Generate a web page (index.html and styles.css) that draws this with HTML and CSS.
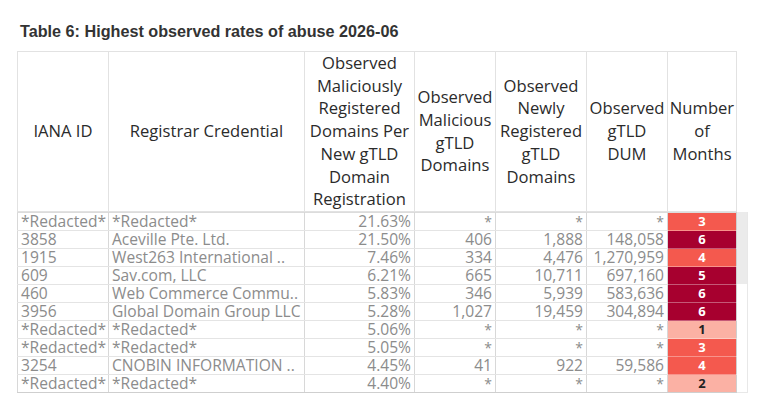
FILE: index.html
```html
<!DOCTYPE html>
<html>
<head>
<meta charset="utf-8">
<link rel="stylesheet" href="styles.css">
</head>
<body>
<h1 class="title">Table 6: Highest observed rates of abuse 2026-06</h1>
<div class="sheet">
  <table class="grid head">
    <colgroup>
      <col class="c1"><col class="c2"><col class="c3"><col class="c4"><col class="c5"><col class="c6"><col class="c7">
    </colgroup>
    <tr>
      <th>IANA ID</th>
      <th>Registrar Credential</th>
      <th>Observed Maliciously Registered Domains Per New gTLD Domain Registration</th>
      <th>Observed Malicious gTLD Domains</th>
      <th>Observed Newly Registered gTLD Domains</th>
      <th>Observed gTLD DUM</th>
      <th>Number of Months</th>
    </tr>
  </table>
  <div class="bodywrap">
    <table class="grid body">
      <colgroup>
        <col class="c1"><col class="c2"><col class="c3"><col class="c4"><col class="c5"><col class="c6"><col class="c7">
      </colgroup>
      <tr><td>*Redacted*</td><td>*Redacted*</td><td class="n">21.63%</td><td class="n s">*</td><td class="n s">*</td><td class="n s">*</td><td class="m mid">3</td></tr>
      <tr><td>3858</td><td>Aceville Pte. Ltd.</td><td class="n">21.50%</td><td class="n">406</td><td class="n">1,888</td><td class="n">148,058</td><td class="m dark">6</td></tr>
      <tr><td>1915</td><td>West263 International ..</td><td class="n">7.46%</td><td class="n">334</td><td class="n">4,476</td><td class="n">1,270,959</td><td class="m mid">4</td></tr>
      <tr><td>609</td><td>Sav.com, LLC</td><td class="n">6.21%</td><td class="n">665</td><td class="n">10,711</td><td class="n">697,160</td><td class="m dark">5</td></tr>
      <tr><td>460</td><td>Web Commerce Commu..</td><td class="n">5.83%</td><td class="n">346</td><td class="n">5,939</td><td class="n">583,636</td><td class="m dark">6</td></tr>
      <tr><td>3956</td><td>Global Domain Group LLC</td><td class="n">5.28%</td><td class="n">1,027</td><td class="n">19,459</td><td class="n">304,894</td><td class="m dark">6</td></tr>
      <tr><td>*Redacted*</td><td>*Redacted*</td><td class="n">5.06%</td><td class="n s">*</td><td class="n s">*</td><td class="n s">*</td><td class="m light">1</td></tr>
      <tr><td>*Redacted*</td><td>*Redacted*</td><td class="n">5.05%</td><td class="n s">*</td><td class="n s">*</td><td class="n s">*</td><td class="m mid">3</td></tr>
      <tr><td>3254</td><td>CNOBIN INFORMATION ..</td><td class="n">4.45%</td><td class="n">41</td><td class="n">922</td><td class="n">59,586</td><td class="m mid">4</td></tr>
      <tr><td>*Redacted*</td><td>*Redacted*</td><td class="n">4.40%</td><td class="n s">*</td><td class="n s">*</td><td class="n s">*</td><td class="m light">2</td></tr>
    </table>
    <div class="scroll"><div class="thumb"></div></div>
  </div>
</div>
</body>
</html>
```
FILE: styles.css
```css
html, body {
  margin: 0;
  padding: 0;
  background: #ffffff;
}
body {
  padding: 22px 0 0 17px;
}
.title {
  margin: 0 0 11px 3px;
  font-family: "Liberation Sans", Arial, sans-serif;
  font-weight: bold;
  font-size: 16.2px;
  line-height: 18px;
  color: #333333;
}
.sheet {
  display: flex;
  flex-direction: column;
  width: 731px;
}
.grid {
  border-collapse: collapse;
  table-layout: fixed;
  width: 719px;
  font-family: "Open Sans", "Noto Sans", sans-serif;
}
.c1 { width: 91px; }
.c2 { width: 196px; }
.c3 { width: 110px; }
.c4 { width: 81px; }
.c5 { width: 91px; }
.c6 { width: 81px; }
.c7 { width: 69px; }
.head th {
  height: 159px;
  padding: 0;
  border: 1px solid #e2e2e2;
  font-weight: normal;
  font-size: 16.6px;
  line-height: 22.7px;
  color: #2b2b2b;
  text-align: center;
  vertical-align: middle;
}
.bodywrap {
  display: flex;
  align-items: flex-start;
}
.body td {
  height: 17px;
  padding: 0 3px 0 3px;
  border-left: 1px solid #d8d8d8;
  border-right: 1px solid #d8d8d8;
  border-bottom: 1px solid #e4e4e4;
  font-size: 15.6px;
  line-height: 17px;
  color: #8c8c8c;
  white-space: nowrap;
}
.body tr:first-child td {
  border-top: 1px solid #dcdcdc;
}
.body tr:last-child td {
  border-bottom: 1px solid #cfcfcf;
}
.body td.n {
  text-align: right;
  padding-right: 3px;
}
.body td.s {
  font-size: 14px;
  vertical-align: top;
}
.body td.m {
  text-align: center;
  font-size: 13px;
  font-weight: bold;
  padding: 0;
  border-bottom: 1px solid rgba(255, 255, 255, 0.35);
  border-right: 1px solid #cfcfcf;
}
.body td.dark { background: #a7002f; color: #ffffff; }
.body td.mid { background: #f4594e; color: #ffffff; }
.body td.light { background: #fbb1a4; color: #222222; }
.scroll {
  width: 10px;
  height: 180px;
  border-right: 1px solid #e8e8e8;
  border-bottom: 1px solid #e8e8e8;
}
.thumb {
  height: 72px;
  background: #ebebeb;
}
```
